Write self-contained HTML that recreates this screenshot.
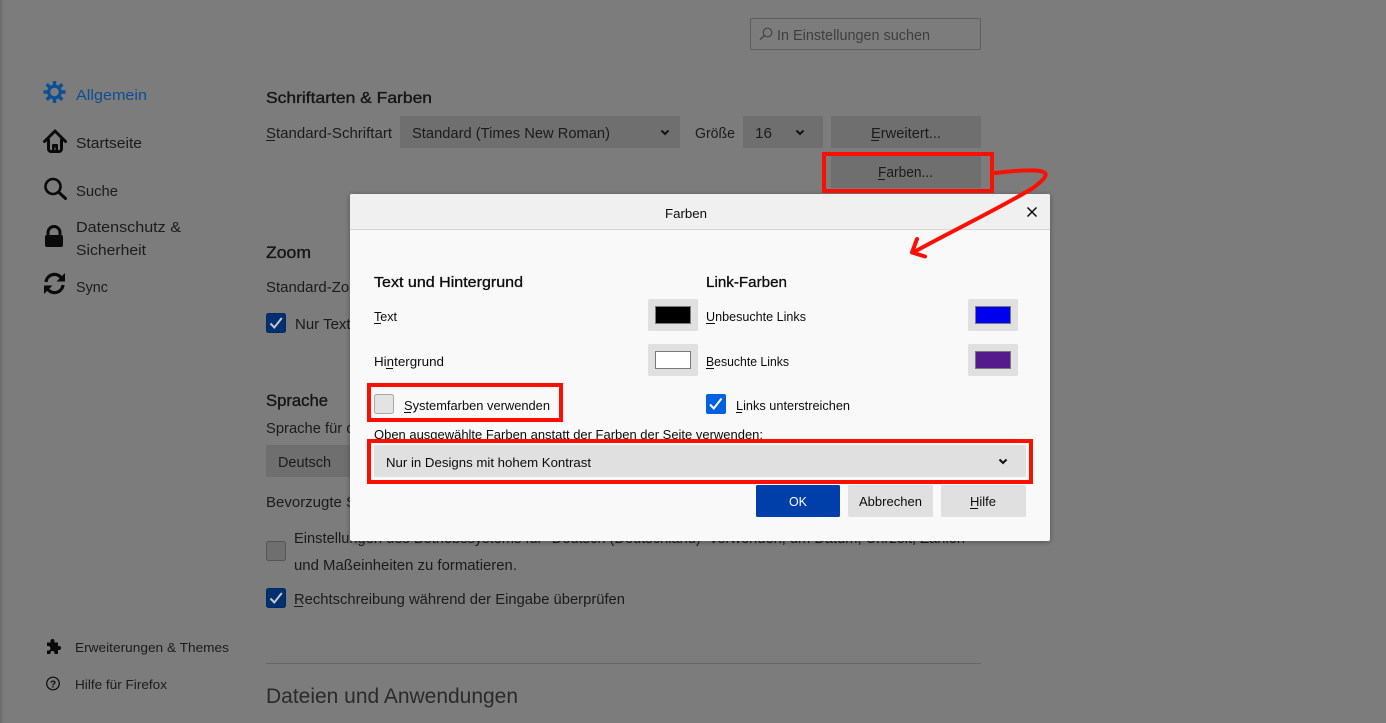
<!DOCTYPE html>
<html lang="de"><head><meta charset="utf-8"><title>Farben</title>
<style>
html,body{margin:0;padding:0;width:1386px;height:723px;overflow:hidden;background:#7c7c7c}
svg{display:block;position:absolute;left:0;top:0}
text{font-family:"Liberation Sans",sans-serif;font-size:15px;fill:#1b1b1b;white-space:pre}
.s{font-size:13px}
.b{font-size:16px;fill:#151515;stroke:#151515;stroke-width:.35px}
.d{fill:#0c0c0d}
.h{stroke:#0c0c0d;stroke-width:.3px}
</style></head><body>
<svg width="1386" height="723" viewBox="0 0 1386 723" xmlns="http://www.w3.org/2000/svg">
<defs>
<linearGradient id="lg" x1="0" x2="1" y1="0" y2="0"><stop offset="0" stop-color="#6a6a6a"/><stop offset="1" stop-color="#7c7c7c"/></linearGradient>
<filter id="sh" x="-5%" y="-5%" width="110%" height="115%"><feDropShadow dx="0" dy="1" stdDeviation="3" flood-color="#000" flood-opacity=".35"/></filter>
</defs>
<rect width="1386" height="723" fill="#7c7c7c"/>
<rect width="4" height="723" fill="url(#lg)"/>

<!-- search -->
<rect x="750.5" y="18.5" width="230" height="31" rx="1.5" fill="none" stroke="#5f5f5f"/>
<circle cx="767.5" cy="32.500" r="4.300" fill="none" stroke="#444" stroke-width="1.200"/>
<path d="M764.300 35.800L760 39.500" stroke="#444" stroke-width="1.400" fill="none"/>
<text x="777" y="40" textLength="153" lengthAdjust="spacingAndGlyphs" style="fill:#3e3e3e">In Einstellungen suchen</text>

<!-- sidebar -->
<g fill="none" stroke="#0c4f94">
<circle cx="54.500" cy="92" r="5.800" stroke-width="3.200"/>
<path stroke-width="3.400" d="M54.500 81V85.500M54.500 98.500V103M43.500 92H48M61 92H65.500M46.700 84.200L50 87.500M59 96.500L62.300 99.800M46.700 99.800L50 96.500M59 87.500L62.300 84.200"/>
</g>
<text x="76" y="100" textLength="71" lengthAdjust="spacingAndGlyphs" style="fill:#0c4f94">Allgemein</text>
<path fill="none" stroke="#0a0a0a" stroke-width="3" stroke-linejoin="round" stroke-linecap="round" d="M44.500 141.500L55 131 65.500 141.500M48.500 140V149a2.500 2.500 0 0 0 2.500 2.500H59a2.500 2.500 0 0 0 2.500-2.500V140"/>
<path fill="#0a0a0a" d="M52 145a1 1 0 0 1 1-1h4a1 1 0 0 1 1 1v6.500h-2.500v-4h-1v4H52z"/>
<text x="76" y="148" textLength="66" lengthAdjust="spacingAndGlyphs">Startseite</text>
<circle cx="53" cy="186.500" r="7.500" fill="none" stroke="#0a0a0a" stroke-width="2.600"/>
<path d="M58.500 192L65.500 198.500" stroke="#0a0a0a" stroke-width="3" stroke-linecap="round"/>
<text x="76" y="196" textLength="42" lengthAdjust="spacingAndGlyphs">Suche</text>
<path fill="none" stroke="#0a0a0a" stroke-width="3" d="M48 236v-3.500a6 6 0 0 1 12 0V236"/>
<rect x="45" y="235" width="18" height="12" rx="2" fill="#0a0a0a"/>
<text x="76" y="232" textLength="105" lengthAdjust="spacingAndGlyphs">Datenschutz &amp;</text>
<text x="76" y="255" textLength="70" lengthAdjust="spacingAndGlyphs">Sicherheit</text>
<path fill="none" stroke="#0a0a0a" stroke-width="3.200" d="M46 282a8.500 8.500 0 0 1 15-4.500M63 285a8.500 8.500 0 0 1-15 4.500"/>
<path fill="#0a0a0a" d="M65 273v8.500h-8.500zM44 294v-8.500h8.500z"/>
<text x="76" y="292" textLength="32" lengthAdjust="spacingAndGlyphs">Sync</text>
<path fill="#0a0a0a" d="M47 642.500h3.500v-1.500a2 2 0 0 1 4 0v1.500H58v3.500h1a2 2 0 0 1 0 4h-1v4h-3.500v-1a2 2 0 0 0-4 0v1H47v-3.500h1.200a2 2 0 0 0 0-4.500H47z"/>
<text class="s" x="75" y="652" textLength="154" lengthAdjust="spacingAndGlyphs">Erweiterungen &amp; Themes</text>
<circle cx="53" cy="683.500" r="6.300" fill="none" stroke="#0a0a0a" stroke-width="1.200"/>
<text x="53" y="687.500" text-anchor="middle" style="font-size:10px;font-weight:bold;fill:#0a0a0a">?</text>
<text class="s" x="75" y="689" textLength="92" lengthAdjust="spacingAndGlyphs">Hilfe für Firefox</text>

<!-- main -->
<text class="b" x="266" y="103" textLength="166" lengthAdjust="spacingAndGlyphs">Schriftarten &amp; Farben</text>
<text x="266" y="138" textLength="126" lengthAdjust="spacingAndGlyphs">Standard-Schriftart</text>
<rect x="266" y="140" width="9" height="1" fill="#1b1b1b"/>
<rect x="400" y="116" width="280" height="32" rx="1.500" fill="#6f6f6f"/>
<text x="412" y="138" textLength="198" lengthAdjust="spacingAndGlyphs">Standard (Times New Roman)</text>
<path d="M661.500 130.500L665 134 668.500 130.500" fill="none" stroke="#111" stroke-width="2"/>
<text x="695" y="138" textLength="40" lengthAdjust="spacingAndGlyphs">Größe</text>
<rect x="743" y="116" width="80" height="32" rx="1.500" fill="#6f6f6f"/>
<text x="755" y="138" textLength="17" lengthAdjust="spacingAndGlyphs">16</text>
<path d="M796.500 130.500L800 134 803.500 130.500" fill="none" stroke="#111" stroke-width="2"/>
<rect x="831" y="116" width="150" height="32" rx="1.500" fill="#6f6f6f"/>
<text x="871" y="138" textLength="70" lengthAdjust="spacingAndGlyphs">Erweitert...</text>
<rect x="871" y="140" width="8" height="1" fill="#1b1b1b"/>
<rect x="831" y="156" width="150" height="32" rx="1.500" fill="#6f6f6f"/>
<text x="878" y="177" textLength="55" lengthAdjust="spacingAndGlyphs">Farben...</text>
<rect x="878" y="179" width="7" height="1" fill="#1b1b1b"/>

<text class="b" x="266" y="258" textLength="45" lengthAdjust="spacingAndGlyphs" style="font-size:17px">Zoom</text>
<text x="266" y="292" textLength="104" lengthAdjust="spacingAndGlyphs">Standard-Zoom</text>
<rect x="266.500" y="313.500" width="19" height="19" rx="2" fill="#003070" stroke="#002a60"/>
<path d="M270.500 323.500l3.800 4 7.500-9.500" fill="none" stroke="#c8c8c8" stroke-width="2"/>
<text x="295" y="329">Nur Text</text>

<text class="b" x="266" y="406" textLength="62" lengthAdjust="spacingAndGlyphs" style="font-size:17px">Sprache</text>
<text x="266" y="433" textLength="100" lengthAdjust="spacingAndGlyphs">Sprache für die</text>
<rect x="266" y="445" width="120" height="32" rx="1.500" fill="#6f6f6f"/>
<text x="278" y="467" textLength="53" lengthAdjust="spacingAndGlyphs">Deutsch</text>
<text x="266" y="507">Bevorzugte Sprachen</text>
<rect x="266.500" y="541.500" width="19" height="19" rx="2" fill="#6f6f6f" stroke="#555"/>
<text x="294" y="543" textLength="671" lengthAdjust="spacingAndGlyphs">Einstellungen des Betriebssystems für "Deutsch (Deutschland)" verwenden, um Datum, Uhrzeit, Zahlen</text>
<text x="294" y="570" textLength="223" lengthAdjust="spacingAndGlyphs">und Maßeinheiten zu formatieren.</text>
<rect x="266.500" y="588.500" width="19" height="19" rx="2" fill="#003070" stroke="#002a60"/>
<path d="M270.500 598.500l3.800 4 7.500-9.500" fill="none" stroke="#c8c8c8" stroke-width="2"/>
<text x="294" y="604" textLength="331" lengthAdjust="spacingAndGlyphs">Rechtschreibung während der Eingabe überprüfen</text>
<rect x="294" y="606" width="9" height="1" fill="#1b1b1b"/>
<rect x="266" y="663" width="715" height="1" fill="#666"/>
<text x="266" y="703" textLength="252" lengthAdjust="spacingAndGlyphs" style="font-size:21px;fill:#2a2a2a">Dateien und Anwendungen</text>

<!-- dialog -->
<rect x="350" y="194" width="700" height="347" rx="2" fill="#f9f9fa" filter="url(#sh)"/>
<path d="M350 230V196a2 2 0 0 1 2-2h696a2 2 0 0 1 2 2v34z" fill="#f0f0f0"/>
<rect x="350" y="229" width="700" height="1" fill="#d6d6d6"/>
<text class="s d" x="665" y="218" textLength="42" lengthAdjust="spacingAndGlyphs">Farben</text>
<path d="M1027.500 207.500L1036.500 216.500M1036.500 207.500L1027.500 216.500" stroke="#0c0c0d" stroke-width="1.500" fill="none"/>

<text class="d h" x="374" y="287" textLength="149" lengthAdjust="spacingAndGlyphs">Text und Hintergrund</text>
<text class="d h" x="706" y="287" textLength="81" lengthAdjust="spacingAndGlyphs">Link-Farben</text>

<text class="s d" x="374" y="321" textLength="23" lengthAdjust="spacingAndGlyphs">Text</text><rect x="374" y="323" width="7" height="1" fill="#0c0c0d"/>
<text class="s d" x="374" y="366" textLength="70" lengthAdjust="spacingAndGlyphs">Hintergrund</text><rect x="386" y="368" width="7" height="1" fill="#0c0c0d"/>
<text class="s d" x="706" y="321" textLength="100" lengthAdjust="spacingAndGlyphs">Unbesuchte Links</text><rect x="706" y="323" width="9" height="1" fill="#0c0c0d"/>
<text class="s d" x="706" y="366" textLength="83" lengthAdjust="spacingAndGlyphs">Besuchte Links</text><rect x="706" y="368" width="8" height="1" fill="#0c0c0d"/>

<rect x="648" y="299" width="50" height="32" rx="1.500" fill="#e0e0e1"/>
<rect x="655.500" y="306.500" width="35" height="17" fill="#000" stroke="#7a7a7a"/>
<rect x="648" y="344" width="50" height="32" rx="1.500" fill="#e0e0e1"/>
<rect x="655.500" y="351.500" width="35" height="17" fill="#fff" stroke="#7a7a7a"/>
<rect x="968" y="299" width="50" height="32" rx="1.500" fill="#e0e0e1"/>
<rect x="975.500" y="306.500" width="35" height="17" fill="#0000ee" stroke="#7a7a7a"/>
<rect x="968" y="344" width="50" height="32" rx="1.500" fill="#e0e0e1"/>
<rect x="975.500" y="351.500" width="35" height="17" fill="#551a8b" stroke="#7a7a7a"/>

<rect x="374.500" y="394.500" width="19" height="19" rx="2" fill="#e3e3e3" stroke="#a8a8a8"/>
<text class="s d" x="404" y="410" textLength="146" lengthAdjust="spacingAndGlyphs">Systemfarben verwenden</text><rect x="404" y="412" width="7" height="1" fill="#0c0c0d"/>
<rect x="706" y="394" width="20" height="20" rx="2" fill="#0060df"/>
<path d="M710 404.500l3.800 4 7.700-10" fill="none" stroke="#fff" stroke-width="2"/>
<text class="s d" x="736" y="410" textLength="114" lengthAdjust="spacingAndGlyphs">Links unterstreichen</text><rect x="736" y="412" width="6" height="1" fill="#0c0c0d"/>
<text class="s d" x="374" y="439" textLength="389" lengthAdjust="spacingAndGlyphs">Oben ausgewählte Farben anstatt der Farben der Seite verwenden:</text>

<rect x="374" y="445" width="652" height="32" rx="1.500" fill="#e0e0e1"/>
<text class="s d" x="386" y="467" textLength="205" lengthAdjust="spacingAndGlyphs">Nur in Designs mit hohem Kontrast</text>
<path d="M999.500 459.500L1003 463 1006.500 459.500" fill="none" stroke="#0c0c0d" stroke-width="2"/>

<rect x="756" y="485" width="84" height="32" rx="1.500" fill="#003eaa"/>
<text class="s" x="789" y="506" textLength="18" lengthAdjust="spacingAndGlyphs" style="fill:#fff">OK</text>
<rect x="848" y="485" width="85" height="32" rx="1.500" fill="#e0e0e1"/>
<text class="s d" x="859" y="506" textLength="63" lengthAdjust="spacingAndGlyphs">Abbrechen</text>
<rect x="941" y="485" width="85" height="32" rx="1.500" fill="#e0e0e1"/>
<text class="s d" x="970" y="506" textLength="26" lengthAdjust="spacingAndGlyphs">Hilfe</text><rect x="970" y="508" width="8" height="1" fill="#0c0c0d"/>

<!-- annotations -->
<g fill="none" stroke="#fb0f00" stroke-width="4">
<rect x="824" y="154" width="168" height="37"/>
<rect x="369" y="385" width="192" height="35"/>
<rect x="369" y="441" width="662" height="41"/>
<path stroke-linecap="round" d="M995.500 173C1010 171 1030 169.500 1040 171 1050 173 1046 178 1033 188 1000 208 950 232 914 252"/>
<path stroke-linecap="round" stroke-linejoin="round" d="M917 239L912 252.500 925 256.500"/>
</g>
</svg>
</body></html>
